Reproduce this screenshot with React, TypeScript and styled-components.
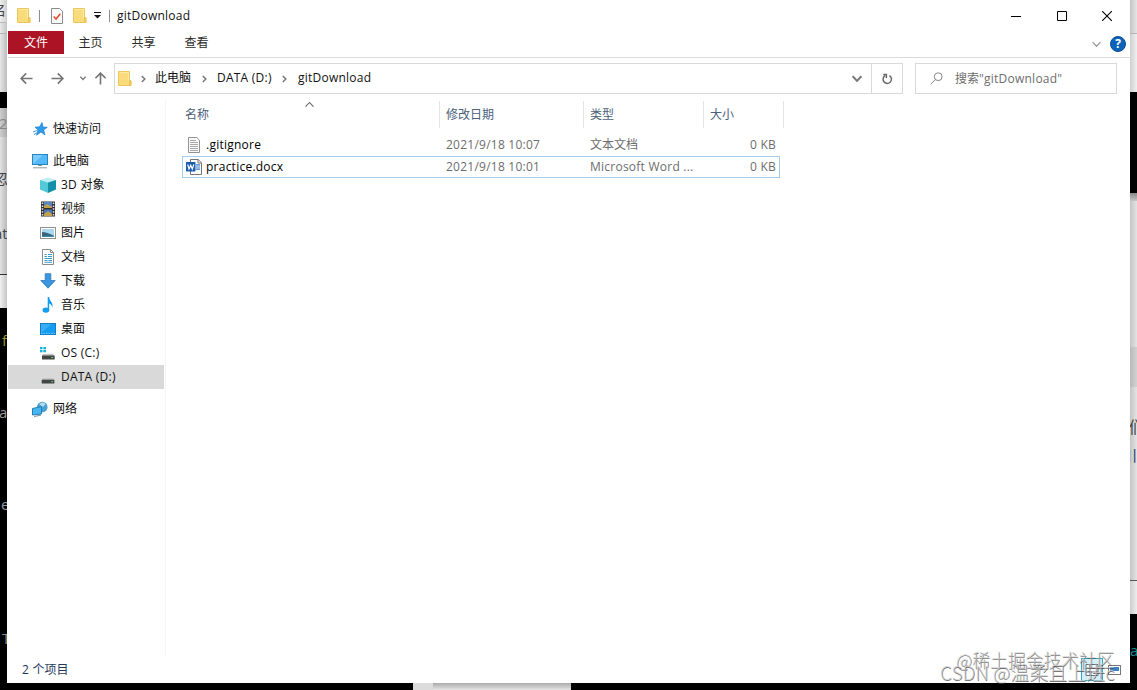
import React from 'react';
import styled, { createGlobalStyle } from 'styled-components';

const Global = createGlobalStyle`
  * { box-sizing: border-box; }
  body { margin: 0; background: #000; overflow: hidden; }
  svg { display: block; flex: none; }
`;

const Desktop = styled.div`
  position: relative;
  width: 1137px;
  height: 690px;
  display: grid;
  grid-template-columns: 7px 1123px 7px;
  grid-template-rows: 683px 7px;
  background: #000;
  overflow: hidden;
  font-family: 'Open Sans', 'Noto Sans CJK SC', sans-serif;
  font-size: 12px;
  line-height: 16px;
  color: #111;
`;

const Strip = styled.div`
  display: flex;
  flex-direction: column;
  overflow: hidden;
`;

const Segment = styled.div<{ $h: number; $bg: string; $line?: string }>`
  flex: none;
  height: ${(p) => p.$h}px;
  background: ${(p) => p.$bg};
  border-bottom: ${(p) => (p.$line ? `1px solid ${p.$line}` : 'none')};
  overflow: hidden;
`;

const Fragment = styled.div<{ $top: number; $shift: number; $color: string; $size?: number }>`
  padding-top: ${(p) => p.$top}px;
  margin-left: ${(p) => p.$shift}px;
  font-size: ${(p) => p.$size ?? 15}px;
  line-height: 20px;
  white-space: nowrap;
  color: ${(p) => p.$color};
`;

const BottomEdge = styled.div`
  grid-column: 1 / -1;
  display: flex;
  padding-left: 413px;
  background: #000;
`;

const BottomPiece = styled.div<{ $w: number; $bg: string }>`
  width: ${(p) => p.$w}px;
  background: ${(p) => p.$bg};
`;

const Window = styled.div`
  display: flex;
  flex-direction: column;
  padding-left: 1px;
  background: #fff;
  overflow: hidden;
`;

const Latin = styled.span`
  letter-spacing: 0.24px;
`;

const TitleBar = styled.div`
  display: flex;
  align-items: center;
  height: 31px;
  padding-left: 9px;
`;

const Tick = styled.i<{ $l: number; $r: number }>`
  width: 1px;
  height: 12px;
  margin: 0 ${(p) => p.$r}px 0 ${(p) => p.$l}px;
  background: #8d8d8d;
`;

const WindowButtons = styled.div`
  display: flex;
  margin-left: auto;
`;

const WindowButton = styled.div`
  width: 45.6px;
  height: 31px;
  display: grid;
  place-items: center;
`;

const TabBar = styled.div`
  display: flex;
  height: 27px;
  padding-bottom: 3px;
  border-bottom: 1px solid #d9dadb;
`;

const FileTab = styled.div`
  width: 56px;
  height: 23px;
  line-height: 23px;
  text-align: center;
  color: #fff;
  background: #ac1425;
`;

const Tab = styled.div`
  width: 53px;
  line-height: 24px;
  text-align: center;
  color: #2b2b2b;
`;

const TabTools = styled.div`
  display: flex;
  align-items: center;
  gap: 9px;
  margin-left: auto;
  padding: 3px 4px 0 0;
`;

const AddressBar = styled.div`
  display: flex;
  height: 41px;
  padding-top: 5px;
`;

const Arrows = styled.div`
  width: 106px;
  padding: 0 7px 0 12px;
  display: flex;
  align-items: center;
  justify-content: space-between;
  height: 31px;
`;

const PathBox = styled.div`
  display: flex;
  align-items: center;
  width: 789px;
  height: 31px;
  border: 1px solid #d9d9d9;
  padding-left: 3px;
`;

const Crumb = styled.span<{ $w: number }>`
  width: ${(p) => p.$w}px;
  white-space: nowrap;
  padding-bottom: 2px;
`;

const CrumbArrow = styled.span<{ $w: number }>`
  width: ${(p) => p.$w}px;
  padding-left: 2px;
`;

const PathTools = styled.div`
  display: flex;
  align-items: center;
  margin-left: auto;
  height: 29px;
`;

const Refresh = styled.div`
  width: 31px;
  height: 29px;
  margin-left: 9px;
  display: grid;
  place-items: center;
  border-left: 1px solid #d9d9d9;
`;

const SearchBox = styled.div`
  display: flex;
  align-items: center;
  gap: 12px;
  width: 202px;
  height: 31px;
  margin-left: 12px;
  padding-left: 14px;
  border: 1px solid #d9d9d9;
  color: #6d6d6d;
`;

const Body = styled.div`
  display: flex;
  height: 558px;
`;

const NavPane = styled.div`
  width: 158px;
  padding-top: 18px;
  border-right: 1px solid #f7f7f7;
`;

const NavItem = styled.div<{ $level: number; $selected?: boolean; $gap?: boolean }>`
  display: flex;
  align-items: center;
  width: 156px;
  height: 24px;
  gap: 5px;
  margin-bottom: ${(p) => (p.$gap ? 8 : 0)}px;
  padding-left: ${(p) => 24 + p.$level * 8}px;
  background: ${(p) => (p.$selected ? '#d9d9d9' : 'transparent')};
  white-space: nowrap;
`;

const Files = styled.div`
  width: 620px;
  padding-left: 16px;
`;

const HeaderRow = styled.div`
  display: flex;
  height: 35px;
  padding-top: 2px;
  color: #4c607a;
`;

const HeaderCell = styled.div<{ $w: number; $pad: number }>`
  display: flex;
  width: ${(p) => p.$w}px;
  height: 27px;
  padding-left: ${(p) => p.$pad}px;
  line-height: 27px;
  border-right: 1px solid #e4e4e4;
`;

const SortMark = styled.div`
  margin-left: 96px;
  padding-top: 0;
`;

const FileRow = styled.div<{ $focused?: boolean }>`
  display: flex;
  align-items: center;
  width: 598px;
  height: 22px;
  border: 1px solid ${(p) => (p.$focused ? '#a3cdea' : 'transparent')};
  color: #6d6d6d;
`;

const NameCell = styled.div`
  display: flex;
  align-items: center;
  gap: 4px;
  width: 263px;
  padding-left: 3px;
  color: #000;
`;

const FileCell = styled.div<{ $w: number; $right?: boolean }>`
  width: ${(p) => p.$w}px;
  text-align: ${(p) => (p.$right ? 'right' : 'left')};
  white-space: nowrap;
`;

const StatusBar = styled.div`
  display: flex;
  align-items: center;
  justify-content: space-between;
  height: 26px;
  padding: 0 9px 0 14px;
  color: #1e395b;
`;

const ViewButtons = styled.div`
  display: flex;
  align-items: center;
  gap: 5px;
`;

const Watermark = styled.div<{ $x: number; $y: number; $size: number }>`
  position: absolute;
  left: ${(p) => p.$x}px;
  top: ${(p) => p.$y}px;
  font-family: 'Noto Sans CJK SC', sans-serif;
  font-weight: 300;
  font-size: ${(p) => p.$size}px;
  line-height: 20px;
  white-space: nowrap;
  color: rgba(205, 205, 205, 0.75);
  text-shadow: 0.6px 0.6px 0 rgba(75, 75, 75, 0.75);
`;

const Folder = () => (
  <svg width="14" height="17" viewBox="0 0 14 17">
    <path d="M.5 1.5H11.5V9.5L13 11V15.5H.5Z" fill="#fbdc7c" stroke="#edc75c" />
    <path d="M1.5 2.5H10.5V15" fill="none" stroke="#ffe9a3" />
    <path d="M11 10.5h2v5h-2z" fill="#f5cd62" stroke="#e7bd4e" strokeWidth=".6" />
  </svg>
);

const Chevron = ({ w = 8, color = '#777', sw = 1.6, up = false }) => (
  <svg width={w} height={w * 0.75} viewBox="0 0 8 6" fill="none" stroke={color} strokeWidth={sw}>
    <path d={up ? 'M.5 5L4 1.3L7.5 5' : 'M.5 1L4 4.7L7.5 1'} />
  </svg>
);

const RightChevron = () => (
  <svg width="5" height="8" viewBox="0 0 5 8" fill="none" stroke="#777" strokeWidth="1.5">
    <path d="M.8 1L3.8 4L.8 7" />
  </svg>
);

const Arrow = ({ angle = 0 }) => (
  <svg width="13" height="13" viewBox="0 0 13 13" fill="none" stroke="#747474" strokeWidth="1.6">
    <g transform={`rotate(${angle} 6.5 6.5)`}>
      <path d="M12.5 6.5H1.3M6.2 1.4L1.1 6.5L6.2 11.6" />
    </g>
  </svg>
);

const icons: Record<string, React.ReactNode> = {
  star: (
    <>
      <path d="M10 1.5L11 6L15.3 6.3L11.6 9L13 14L9 11L4.5 14.2L6 9L3 6.2L7.6 5.8Z" fill="#2f9ae8" stroke="#1b7fd0" strokeWidth=".7" />
      <path d="M1 11L5 9.5M2 13.5L5 11.8" stroke="#4a9fdd" />
    </>
  ),
  pc: (
    <>
      <rect x=".5" y="1.5" width="15" height="10" fill="#55b8f7" stroke="#2586c2" />
      <path d="M1 11L11 2H1Z" fill="#7bccfb" />
      <path d="M6 12.5h4M1 14.8h14" stroke="#8a9ba7" />
    </>
  ),
  cube: (
    <>
      <path d="M0 3L8 .5L16 3L8 5.5Z" fill="#bdeff3" />
      <path d="M0 3L8 5.5V16L0 12.5Z" fill="#52c9d8" />
      <path d="M16 3L8 5.5V16L16 12.5Z" fill="#168fa9" />
    </>
  ),
  film: (
    <>
      <path d="M1 .5h14v15H1z" fill="#303030" />
      <path d="M4 1h8v6H4z" fill="#5386c5" />
      <path d="M4 8.5h8V15H4z" fill="#4876bd" />
      <path d="M4 5l3-2 5 3v1H4zM4 13l4-3 4 3v2H4z" fill="#c2a04c" />
      <path d="M2.5 1.5V15M13.5 1.5V15" stroke="#e8e8e8" strokeWidth="1.5" strokeDasharray="1.5 1.4" />
    </>
  ),
  picture: (
    <>
      <rect x=".5" y="2.5" width="15" height="11" fill="#fff" stroke="#929292" />
      <path d="M2 4h12v8H2z" fill="#a9d8ef" />
      <path d="M2 7Q7 7 14 11V12H2Z" fill="#36657d" />
      <path d="M2 10.8h12V12H2z" fill="#3b86a7" />
    </>
  ),
  document: (
    <>
      <path d="M2.5.5H10.5L13.5 3.5V15.5H2.5Z" fill="#fff" stroke="#8b8b8b" />
      <path d="M10.5.5V3.5H13.5" fill="none" stroke="#8b8b8b" />
      <path d="M4.5 5.5h2.2M8 5.5h4M4.5 7.5h2.5M8 7.5h4M4.5 9.5h7.5M4.5 11.5h3M8.5 11.5H12M4.5 13.3H12" stroke="#3a9bc9" strokeWidth="1.1" />
    </>
  ),
  download: <path d="M5.2.7H10.8V7.5H15.2L8 15.2L.8 7.5H5.2Z" fill="#3b96df" stroke="#2a79bd" strokeWidth=".8" />,
  music: (
    <>
      <path d="M7.7 0H9.2C9.2 4 13.5 5 12.4 10.5C11.8 8 10.5 6.7 9.2 6.4V13H7.7Z" fill="#159df0" />
      <ellipse cx="5.9" cy="13.1" rx="3.4" ry="2.6" fill="#159df0" />
    </>
  ),
  desktop: (
    <>
      <rect x=".5" y="2.5" width="15" height="11" fill="#159cf1" stroke="#0d7fc9" />
      <path d="M1 12L12 3H1Z" fill="#38acf6" />
      <path d="M1 12.5h14" stroke="#74c9fa" strokeDasharray="1.5 1" />
    </>
  ),
  osDrive: (
    <>
      <path d="M0 2h2.5v2.2H0zM3.3 2H6v2.2H3.3zM0 5h2.5v2.2H0zM3.3 5H6v2.2H3.3z" fill="#18b2dc" />
      <path d="M3 9L13 8.7L14.5 11H2Z" fill="#c3c3c3" />
      <rect x="2" y="10.5" width="12.7" height="4" rx=".6" fill="#414645" />
      <path d="M11.3 12.5h1.8" stroke="#65dc77" />
    </>
  ),
  drive: (
    <>
      <path d="M3 9.5H13L14.5 11H1.8Z" fill="#b7b7b7" />
      <rect x="1.7" y="10.8" width="12.7" height="3.7" rx=".6" fill="#414645" />
      <path d="M11.3 12.7h1.8" stroke="#65dc77" />
    </>
  ),
  network: (
    <>
      <circle cx="10.3" cy="6" r="5.3" fill="#4b9fd1" />
      <path d="M7 3Q11 0 13.5 3L11 6Z" fill="#b2ddef" />
      <path d="M.5 7.5L9.5 5.5V13L.5 14Z" fill="#47b5ef" stroke="#247eb5" />
      <path d="M2 15.5L9 14.2" stroke="#7e929e" />
    </>
  ),
  text: (
    <>
      <path d="M2.5.5H10.8L13.5 3.2V15.5H2.5Z" fill="#f8f8f8" stroke="#929292" />
      <path d="M4 3.5h6M4 5.5h8M4 7.5h8M4 9.5h8M4 11.5h8M4 13.5h8" stroke="#a9a9a9" />
    </>
  ),
  word: (
    <>
      <path d="M4.5.5H12.2L15.5 3.8V15.5H4.5Z" fill="#fff" stroke="#777" />
      <path d="M12 .5V4H15.5" fill="none" stroke="#777" />
      <path d="M10 5.8h4M10 8h4M10 10.2h4" stroke="#2d7bd0" strokeWidth="1.2" />
      <rect x="0" y="3" width="9.5" height="9.5" rx=".7" fill="#1c5cb0" />
      <path d="M1.7 5.5L3 10L4.7 6.2L6.3 10L7.8 5.5" fill="none" stroke="#fff" strokeWidth="1.2" />
    </>
  ),
};

const Icon = ({ name }: { name: string }) => (
  <svg width="16" height="16" viewBox="0 0 16 16">{icons[name]}</svg>
);

const navItems = [
  { icon: 'star', label: '快速访问', level: 0, gap: true },
  { icon: 'pc', label: '此电脑', level: 0 },
  { icon: 'cube', latin: '3D ', label: '对象', level: 1 },
  { icon: 'film', label: '视频', level: 1 },
  { icon: 'picture', label: '图片', level: 1 },
  { icon: 'document', label: '文档', level: 1 },
  { icon: 'download', label: '下载', level: 1 },
  { icon: 'music', label: '音乐', level: 1 },
  { icon: 'desktop', label: '桌面', level: 1 },
  { icon: 'osDrive', latin: 'OS (C:)', label: '', level: 1 },
  { icon: 'drive', latin: 'DATA (D:)', label: '', level: 1, selected: true, gap: true },
  { icon: 'network', label: '网络', level: 0 },
];

const files = [
  { icon: 'text', name: '.gitignore', date: '2021/9/18 10:07', type: '文本文档', latinType: false, focused: false },
  { icon: 'word', name: 'practice.docx', date: '2021/9/18 10:01', type: 'Microsoft Word ...', latinType: true, focused: true },
];

export default function App() {
  return (
    <>
      <Global />
      <Desktop>
        <Strip>
          <Segment $h={23} $bg="linear-gradient(90deg,#eee,#cfcfcf)" $line="#bbb">
            <Fragment $top={0} $shift={-8} $color="#444" $size={14}>名</Fragment>
          </Segment>
          <Segment $h={11} $bg="linear-gradient(90deg,#e8e8e8,#c4c4c4)" $line="#b5b5b5" />
          <Segment $h={58} $bg="linear-gradient(90deg,#e6e6e6,#bdbdbd)" />
          <Segment $h={16} $bg="#000" />
          <Segment $h={29} $bg="linear-gradient(90deg,#cdcdcd,#aaa)">
            <Fragment $top={5} $shift={-1} $color="#858585">2</Fragment>
          </Segment>
          <Segment $h={138} $bg="linear-gradient(90deg,#e2e2e2,#b9b9b9)" $line="#333">
            <Fragment $top={31} $shift={-7} $color="#444">忽</Fragment>
            <Fragment $top={35} $shift={-6} $color="#444">at</Fragment>
          </Segment>
          <Segment $h={33} $bg="linear-gradient(90deg,#efefef,#c6c6c6)" />
          <Segment $h={375} $bg="#000">
            <Fragment $top={22} $shift={2} $color="#929b24">f</Fragment>
            <Fragment $top={52} $shift={-1} $color="#999">a</Fragment>
            <Fragment $top={72} $shift={1} $color="#919ca3">e</Fragment>
            <Fragment $top={114} $shift={2} $color="#8a8d96">T</Fragment>
          </Segment>
        </Strip>

        <Window>
          <TitleBar>
            <Folder />
            <Tick $l={8} $r={11} />
            <svg width="12" height="16" viewBox="0 0 12 16" fill="none">
              <path d="M.5.5H8.7L11.5 3.3V15.5H.5Z" fill="#fafafa" stroke="#8a8a8a" />
              <path d="M2.7 8.5L5 11L9.3 5.7" stroke="#e2512d" strokeWidth="1.6" />
            </svg>
            <div style={{ width: 10 }} />
            <Folder />
            <svg width="9" height="9" viewBox="0 0 9 9" style={{ marginLeft: 6 }}>
              <path d="M1 1.5h7" stroke="#111" />
              <path d="M1 4h7L4.5 7.5Z" fill="#111" />
            </svg>
            <Tick $l={7} $r={7} />
            <Latin>gitDownload</Latin>
            <WindowButtons>
              <WindowButton><svg width="10" height="10"><path d="M0 5.5h10" stroke="#000" /></svg></WindowButton>
              <WindowButton><svg width="10" height="10"><path d="M.5.5h9v9h-9z" stroke="#000" fill="none" /></svg></WindowButton>
              <WindowButton><svg width="10" height="10"><path d="M0 0L10 10M10 0L0 10" stroke="#000" strokeWidth="1.1" /></svg></WindowButton>
            </WindowButtons>
          </TitleBar>
          <TabBar>
            <FileTab>文件</FileTab>
            <Tab>主页</Tab>
            <Tab>共享</Tab>
            <Tab>查看</Tab>
            <TabTools>
              <Chevron w={9} color="#999" sw={1.1} />
              <svg width="16" height="16" viewBox="0 0 16 16">
                <circle cx="8" cy="8" r="7.5" fill="#0b64b9" stroke="#084f98" />
                <text x="8" y="12.4" textAnchor="middle" fill="#fff" fontSize="12" fontWeight="700">?</text>
              </svg>
            </TabTools>
          </TabBar>
          <AddressBar>
            <Arrows>
              <Arrow />
              <div style={{ marginLeft: 10 }}><Arrow angle={180} /></div>
              <div style={{ marginLeft: 8 }}><Chevron w={6} /></div>
              <Arrow angle={90} />
            </Arrows>
            <PathBox>
              <Folder />
              <CrumbArrow $w={23}><div style={{ paddingLeft: 7 }}><RightChevron /></div></CrumbArrow>
              <Crumb $w={45}>此电脑</Crumb>
              <CrumbArrow $w={17}><RightChevron /></CrumbArrow>
              <Crumb $w={63}><Latin>DATA (D:)</Latin></Crumb>
              <CrumbArrow $w={18}><RightChevron /></CrumbArrow>
              <Crumb $w={90}><Latin>gitDownload</Latin></Crumb>
              <PathTools>
                <Chevron w={10} />
                <Refresh>
                  <svg width="11" height="12" viewBox="0 0 11 12" fill="none" stroke="#686868" strokeWidth="1.5">
                    <path d="M7.4 2.6A4.2 4.2 0 1 1 3 2.7M1.3 1.4H4.4V5" />
                  </svg>
                </Refresh>
              </PathTools>
            </PathBox>
            <SearchBox>
              <svg width="13" height="13" viewBox="0 0 13 13" fill="none" stroke="#858585">
                <circle cx="8.2" cy="4.7" r="3.9" />
                <path d="M5.4 7.5L.6 12.3" />
              </svg>
              <span>搜索<Latin>"gitDownload"</Latin></span>
            </SearchBox>
          </AddressBar>
          <Body>
            <NavPane>
              {navItems.map((n) => (
                <NavItem key={n.icon} $level={n.level} $selected={n.selected} $gap={n.gap}>
                  <Icon name={n.icon} />
                  <span>{n.latin && <Latin>{n.latin}</Latin>}{n.label}</span>
                </NavItem>
              ))}
            </NavPane>
            <Files>
              <HeaderRow>
                <HeaderCell $w={258} $pad={3}>
                  名称
                  <SortMark><Chevron w={9} color="#666" sw={1} up /></SortMark>
                </HeaderCell>
                <HeaderCell $w={144} $pad={6}>修改日期</HeaderCell>
                <HeaderCell $w={120} $pad={6}>类型</HeaderCell>
                <HeaderCell $w={80} $pad={6}>大小</HeaderCell>
              </HeaderRow>
              {files.map((f) => (
                <FileRow key={f.name} $focused={f.focused}>
                  <NameCell><Icon name={f.icon} /><Latin>{f.name}</Latin></NameCell>
                  <FileCell $w={144}><Latin>{f.date}</Latin></FileCell>
                  <FileCell $w={120}>{f.latinType ? <Latin>{f.type}</Latin> : f.type}</FileCell>
                  <FileCell $w={66} $right><Latin>0 KB</Latin></FileCell>
                </FileRow>
              ))}
            </Files>
          </Body>
          <StatusBar>
            <span><Latin>2 </Latin>个项目</span>
            <ViewButtons>
              <svg width="22" height="24" viewBox="0 0 22 24">
                <rect x=".5" y=".5" width="21" height="22" fill="#d5eff7" stroke="#35a8c8" />
                <path d="M5 6.5h12v11H5zM5 10h12M5 14h12M9 7v10" fill="#fff" stroke="#61707b" />
              </svg>
              <svg width="13" height="10" viewBox="0 0 13 10">
                <rect x=".5" y=".5" width="12" height="9" fill="#fff" stroke="#777" />
                <path d="M2 2h9v4H2z" fill="#3983c5" />
              </svg>
            </ViewButtons>
          </StatusBar>
        </Window>

        <Strip>
          <Segment $h={34} $bg="linear-gradient(90deg,#c4c4c4,#e6e6e6)" $line="#b8b8b8" />
          <Segment $h={58} $bg="linear-gradient(90deg,#cfcfcf,#f0f0f0)" />
          <Segment $h={101} $bg="#000" />
          <Segment $h={8} $bg="linear-gradient(#888,#c7c7c7)" />
          <Segment $h={146} $bg="linear-gradient(90deg,#c4c4c4,#e4e4e4)" />
          <Segment $h={40} $bg="linear-gradient(90deg,#b9b9b9,#d2d2d2)" />
          <Segment $h={194} $bg="linear-gradient(90deg,#c4c4c4,#e4e4e4)" $line="#555">
            <Fragment $top={30} $shift={-1} $color="#444" $size={16}>们</Fragment>
            <Fragment $top={8} $shift={-9} $color="#364b70" $size={16}>川忽</Fragment>
          </Segment>
          <Segment $h={33} $bg="linear-gradient(90deg,#ccc,#eee)" />
          <Segment $h={69} $bg="#000">
            <Fragment $top={26} $shift={0} $color="#168e93">a</Fragment>
          </Segment>
        </Strip>

        <BottomEdge>
          <BottomPiece $w={20} $bg="#dcdcdc" />
          <BottomPiece $w={138} $bg="linear-gradient(#aaa,#e4e4e4)" />
        </BottomEdge>

        <Watermark $x={956} $y={649} $size={17.8}>@稀土掘金技术社区</Watermark>
        <Watermark $x={940} $y={662} $size={19}>CSDN @温柔且上进c</Watermark>
      </Desktop>
    </>
  );
}
